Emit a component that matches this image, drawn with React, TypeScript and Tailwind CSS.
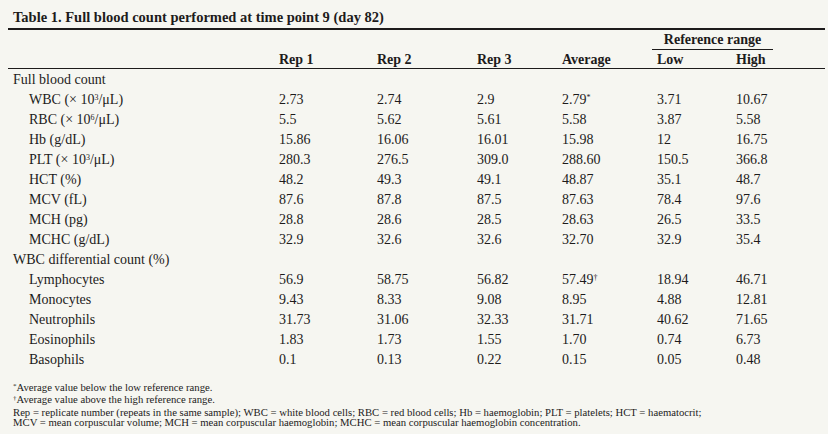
import React from 'react';

type Row = { label: React.ReactNode; vals?: React.ReactNode[]; indent?: boolean };

const sup = (s: string) => <sup className="text-[8px]">{s}</sup>;
const note = (s: string) => <span className="relative -top-[3px] text-[7px]">{s}</span>;

const rows: Row[] = [
  { label: 'Full blood count' },
  { label: <>WBC (× 10{sup('3')}/μL)</>, vals: ['2.73', '2.74', '2.9', <>2.79{sup('*')}</>, '3.71', '10.67'], indent: true },
  { label: <>RBC (× 10{sup('6')}/μL)</>, vals: ['5.5', '5.62', '5.61', '5.58', '3.87', '5.58'], indent: true },
  { label: 'Hb (g/dL)', vals: ['15.86', '16.06', '16.01', '15.98', '12', '16.75'], indent: true },
  { label: <>PLT (× 10{sup('3')}/μL)</>, vals: ['280.3', '276.5', '309.0', '288.60', '150.5', '366.8'], indent: true },
  { label: 'HCT (%)', vals: ['48.2', '49.3', '49.1', '48.87', '35.1', '48.7'], indent: true },
  { label: 'MCV (fL)', vals: ['87.6', '87.8', '87.5', '87.63', '78.4', '97.6'], indent: true },
  { label: 'MCH (pg)', vals: ['28.8', '28.6', '28.5', '28.63', '26.5', '33.5'], indent: true },
  { label: 'MCHC (g/dL)', vals: ['32.9', '32.6', '32.6', '32.70', '32.9', '35.4'], indent: true },
  { label: 'WBC differential count (%)' },
  { label: 'Lymphocytes', vals: ['56.9', '58.75', '56.82', <>57.49{sup('†')}</>, '18.94', '46.71'], indent: true },
  { label: 'Monocytes', vals: ['9.43', '8.33', '9.08', '8.95', '4.88', '12.81'], indent: true },
  { label: 'Neutrophils', vals: ['31.73', '31.06', '32.33', '31.71', '40.62', '71.65'], indent: true },
  { label: 'Eosinophils', vals: ['1.83', '1.73', '1.55', '1.70', '0.74', '6.73'], indent: true },
  { label: 'Basophils', vals: ['0.1', '0.13', '0.22', '0.15', '0.05', '0.48'], indent: true },
];

const cols = 'grid grid-cols-[271px_98px_100px_85px_95px_79px_1fr]';

export default function App() {
  return (
    <div className="w-[828px] h-[434px] bg-[#f6f6f1] text-[#1d1b1b] font-['Liberation_Serif',serif] pl-[8px] pr-[3px]">
      {/* title */}
      <div className="h-[30px] pt-[7px] pl-[5px] border-b-2 border-[#1d1b1b] text-[14.5px] leading-[20px] font-bold">
        Table 1. Full blood count performed at time point 9 (day 82)
      </div>

      {/* header */}
      <div className={`${cols} text-[14px] font-bold`}>
        <div className="col-start-6 col-span-2 w-[121px] -ml-[5px] h-[20px] leading-[19px] border-b border-[#1d1b1b] text-center">
          Reference range
        </div>
      </div>
      <div className={`${cols} h-[19px] leading-[20px] border-b border-[#1d1b1b] text-[14px] font-bold`}>
        <div />
        <div>Rep 1</div>
        <div>Rep 2</div>
        <div>Rep 3</div>
        <div>Average</div>
        <div>Low</div>
        <div>High</div>
      </div>

      {/* body */}
      <div className="text-[14px] pt-[1px]">
        {rows.map((r, i) => (
          <div key={i} className={`${cols} h-[20px] leading-[20px]`}>
            <div className={r.indent ? 'pl-[21px]' : 'pl-[5px]'}>{r.label}</div>
            {r.vals?.map((v, j) => (
              <div key={j}>{v}</div>
            ))}
          </div>
        ))}
      </div>

      {/* footnotes */}
      <div className="mt-[12px] pl-[5px] text-[10.7px] leading-[10.4px]">
        <div>{note('*')}Average value below the low reference range.</div>
        <div>{note('†')}Average value above the high reference range.</div>
        <div>
          Rep = replicate number (repeats in the same sample); WBC = white blood cells; RBC = red blood cells; Hb = haemoglobin; PLT = platelets; HCT = haematocrit;
        </div>
        <div>MCV = mean corpuscular volume; MCH = mean corpuscular haemoglobin; MCHC = mean corpuscular haemoglobin concentration.</div>
      </div>
    </div>
  );
}
